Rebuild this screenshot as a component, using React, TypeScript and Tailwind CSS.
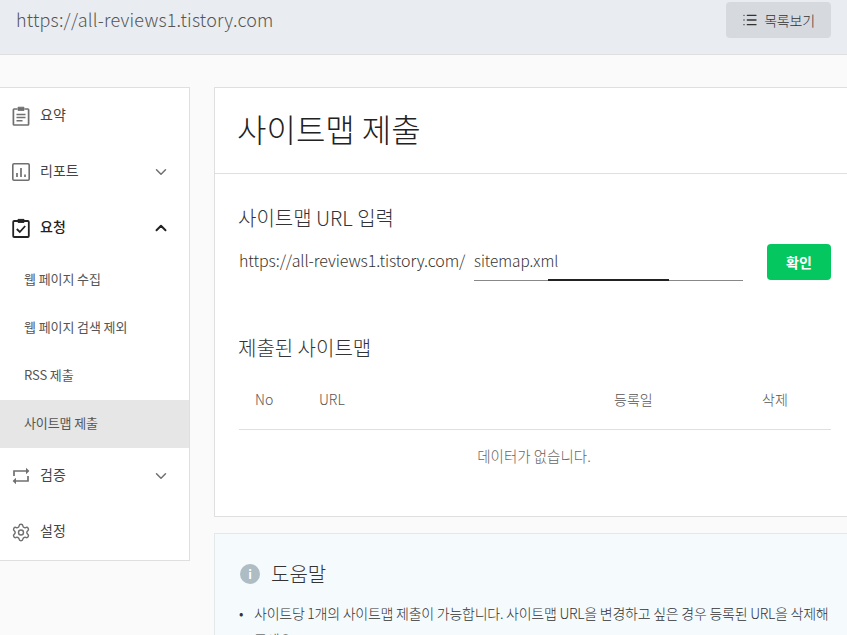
import React from "react";
import { ChevronDown, ChevronUp, List, Settings } from "lucide-react";

const F = '"Noto Sans CJK KR", sans-serif';

function Clip() {
  return (
    <svg width="20" height="20" viewBox="0 0 20 20" fill="none" stroke="#707070" strokeWidth="1.7">
      <path d="M6.5 3H3.2a.8.8 0 0 0-.8.8v14.4a.8.8 0 0 0 .8.8h13.6a.8.8 0 0 0 .8-.8V3.8a.8.8 0 0 0-.8-.8h-3.3" />
      <path d="M7 1.2h6v3.3H7z" fill="#707070" strokeWidth="0.8" />
      <path d="M5.5 8.5h9M5.5 11.6h9M5.5 14.8h6" strokeWidth="1.5" />
    </svg>
  );
}
function Chart() {
  return (
    <svg width="20" height="20" viewBox="0 0 20 20" fill="none" stroke="#707070">
      <rect x="1.8" y="1.8" width="16.4" height="16.4" rx="1.2" strokeWidth="1.6" />
      <path d="M6 15v-4M10 15V6M14 15v-2.5" strokeWidth="1.7" />
    </svg>
  );
}
function ClipCheck() {
  return (
    <svg width="20" height="20" viewBox="0 0 20 20" fill="none" stroke="#222" strokeWidth="1.8">
      <path d="M7 3H3.2a1 1 0 0 0-1 1v14a1 1 0 0 0 1 1h13.6a1 1 0 0 0 1-1V4a1 1 0 0 0-1-1H13" />
      <path d="M7 1.4h6v3H7z" fill="#222" strokeWidth="1" />
      <path d="M5.8 11l3 3 5.4-6" />
    </svg>
  );
}
function Repeat() {
  return (
    <svg width="20" height="20" viewBox="0 0 20 20" fill="none" stroke="#707070" strokeWidth="1.7">
      <path d="M3 10V5h14" />
      <path d="M15 1.8 18.4 5 15 8.2z" fill="#707070" stroke="none" />
      <path d="M17 10v5H3" />
      <path d="M5 11.8 1.6 15 5 18.2z" fill="#707070" stroke="none" />
    </svg>
  );
}

function Row({ icon, label, chev, bold }: { icon: React.ReactNode; label: string; chev?: "up" | "down"; bold?: boolean }) {
  return (
    <div className="h-14 flex items-center pl-[11px] pr-[19px]">
      <span className="w-5 h-5 flex items-center justify-center">{icon}</span>
      <span className={`ml-[9px] text-[14px] flex-1 -mt-[3px] ${bold ? "font-medium text-[#222]" : "text-[#444]"}`}>{label}</span>
      {chev === "down" && <ChevronDown size={18} color="#707070" strokeWidth={2} />}
      {chev === "up" && <ChevronUp size={18} color="#222" strokeWidth={2.6} />}
    </div>
  );
}

function Sub({ label, active }: { label: string; active?: boolean }) {
  return (
    <div className={`h-12 flex items-center pl-[24px] pb-[3px] text-[13px] tracking-[-0.1px] text-[#555] ${active ? "bg-[#e6e6e6]" : ""}`}>{label}</div>
  );
}

export default function App() {
  return (
    <div className="w-[847px] h-[635px] overflow-hidden bg-[#fafafa]" style={{ fontFamily: F }}>
      <header className="h-[55px] bg-[#e9edf1] border-b border-[#dfdfdf] flex items-start justify-between pl-[16px] pr-[16px]">
        <span className="text-[18px] tracking-[0.2px] leading-[24px] mt-[7px] text-[#555] font-light">https://all-reviews1.tistory.com</span>
        <button className="mt-[2px] w-[105px] h-[36px] bg-[#d6dade] rounded-[4px] flex items-center justify-center gap-[6px] text-[14px] tracking-[-0.2px] font-light text-[#333]">
          <List size={16} color="#333" />
          목록보기
        </button>
      </header>
      <div className="flex items-start pt-[32px] gap-[24px]">
        <aside className="w-[190px] shrink-0 bg-white border border-l-0 border-[#dfdfdf] h-[474px]">
          <Row icon={<Clip />} label="요약" />
          <Row icon={<Chart />} label="리포트" chev="down" />
          <Row icon={<ClipCheck />} label="요청" chev="up" bold />
          <div>
            <Sub label="웹 페이지 수집" />
            <Sub label="웹 페이지 검색 제외" />
            <Sub label="RSS 제출" />
            <Sub label="사이트맵 제출" active />
          </div>
          <Row icon={<Repeat />} label="검증" chev="down" />
          <Row icon={<Settings size={21} color="#707070" strokeWidth={1.7} />} label="설정" />
        </aside>
        <main className="w-[642px] shrink-0">
          <section className="bg-white border border-[#dfdfdf] h-[430px] px-[24px]">
            <div className="-mx-[24px] px-[24px] h-[86px] border-b border-[#dfdfdf] flex items-center pb-[5px]">
              <h1 className="text-[32px] font-light text-[#222] leading-none -ml-[2px]">사이트맵 제출</h1>
            </div>
            <h2 className="mt-[31px] -ml-[1px] text-[20px] leading-[26px] font-light text-[#333]">사이트맵 URL 입력</h2>
            <div className="mt-[14px] flex items-start">
              <span className="text-[16px] tracking-[-0.1px] leading-[30px] text-[#333] font-light w-[235px]">https://all-reviews1.tistory.com/</span>
              <div className="w-[269px] h-[36px] border-b border-[#888] relative text-[15.3px] leading-[30px] text-[#333] font-light">
                sitemap.xml
                <div className="absolute left-[74px] -bottom-[1px] w-[121px] h-[2px] bg-[#222]" />
              </div>
              <button className="ml-[24px] -mt-[1px] w-[64px] h-[36px] rounded-[4px] bg-[#05c75f] text-white text-[14px] font-bold">확인</button>
            </div>
            <h2 className="mt-[54px] text-[20px] leading-[26px] font-light text-[#333] -ml-[1px]">제출된 사이트맵</h2>
            <div className="mt-[10px] h-[59px] border-b border-[#dfdfdf] flex items-center text-[14px] font-light text-[#555] pb-[2px]">
              <span className="w-[80px] pl-[16px]">No</span>
              <span className="w-[295px]">URL</span>
              <span className="w-[148px]">등록일</span>
              <span>삭제</span>
            </div>
            <div className="text-center text-[14.5px] font-light text-[#666] mt-[16px] leading-[20px] pr-[2px]">데이터가 없습니다.</div>
          </section>
          <section className="mt-[16px] bg-[#f5fafd] border border-[#e3e8ea] h-[200px] px-[24px]">
            <div className="mt-[28px] flex items-center h-[24px]">
              <span className="w-5 h-5 rounded-full bg-[#aebcc4] text-white text-[12px] font-bold flex items-center justify-center ml-[1px]">i</span>
              <span className="ml-[11px] text-[20px] font-light text-[#333]">도움말</span>
            </div>
            <ul className="mt-[14px] text-[14px] tracking-[-0.25px] leading-[26px] font-light text-[#333] w-[593px]">
              <li className="flex">
                <span className="w-[15px] shrink-0">•</span>
                <span>사이트당 1개의 사이트맵 제출이 가능합니다. 사이트맵 URL을 변경하고 싶은 경우 등록된 URL을 삭제해 주세요.</span>
              </li>
            </ul>
          </section>
        </main>
      </div>
    </div>
  );
}
